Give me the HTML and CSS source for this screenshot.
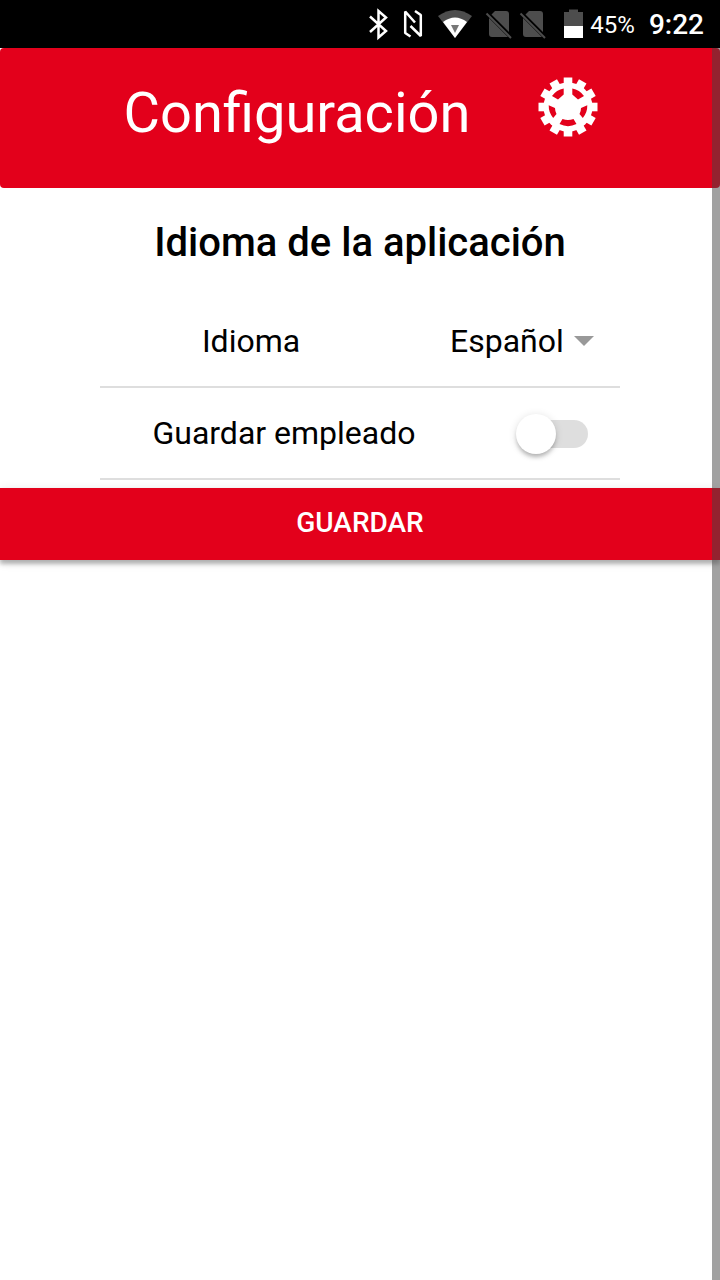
FILE: index.html
```html
<!DOCTYPE html>
<html lang="es">
<head>
<meta charset="utf-8">
<meta name="viewport" content="width=device-width, initial-scale=1">
<title>Configuración</title>
<link rel="stylesheet" href="styles.css">
</head>
<body>
<div class="status-bar">
  <svg class="status-icons" viewBox="360 0 228 48" width="228" height="48" aria-hidden="true">
    <path d="M370 16.500L386 31L378.500 37.500V11L386 17.500L370 32" fill="none" stroke="#fff" stroke-width="2.500"/>
    <path d="M410.500 36.500L405.200 33V11.500L415 22.500M415 11L420.800 15V36L410.500 26" fill="none" stroke="#fff" stroke-width="2.500" stroke-linejoin="bevel"/>
    <path d="M438 16Q455 4 472 16L455 38Z" fill="#4d4d4d"/>
    <path d="M443 22Q455 13 467 22L455 38Z" fill="#fff"/>
    <path d="M451 25H459L455 33Z" fill="#777"/>
    <g id="no-sim">
      <path d="M495 11H506Q509 11 509 14V33L491 15ZM489 18L508 37H492Q489 37 489 34Z" fill="#4d4d4d"/>
      <path d="M489 13.500L512 36.500" stroke="#000" stroke-width="2"/>
      <path d="M486.500 13.500L511 38" stroke="#4d4d4d" stroke-width="2"/>
    </g>
    <use href="#no-sim" x="34"/>
    <path d="M564 12H569V9.500H578V12H583V26H564Z" fill="#4d4d4d"/>
    <path d="M564 26H583V38H564Z" fill="#fff"/>
  </svg>
  <span class="battery">45%</span>
  <time class="clock">9:22</time>
</div>
<main class="page">
  <header class="header">
    <h1 class="title">Configuración</h1>
    <svg class="gear" viewBox="-30 -30 60 60" aria-hidden="true">
      <defs><path id="tooth" d="M-4.300 -29.500H4.300V-22H-4.300Z"/></defs>
      <g class="gear-body">
        <circle r="24.500"/>
        <use href="#tooth"/><use href="#tooth" transform="rotate(30)"/><use href="#tooth" transform="rotate(60)"/>
        <use href="#tooth" transform="rotate(90)"/><use href="#tooth" transform="rotate(120)"/><use href="#tooth" transform="rotate(150)"/>
        <use href="#tooth" transform="rotate(180)"/><use href="#tooth" transform="rotate(210)"/><use href="#tooth" transform="rotate(240)"/>
        <use href="#tooth" transform="rotate(270)"/><use href="#tooth" transform="rotate(300)"/><use href="#tooth" transform="rotate(330)"/>
      </g>
      <path class="gear-holes" d="M-16 -11A19 19 0 0 1 -4.300 -18.500V-12.500L-10 -7.500ZM16 -11A19 19 0 0 0 4.300 -18.500V-12.500L10 -7.500ZM-19.300 -1.700L-13 1Q-13 4 -11.500 7L-14.800 11A19 19 0 0 1 -19.300 -1.700ZM19.300 -1.700L13 1Q13 4 11.500 7L14.800 11A19 19 0 0 0 19.300 -1.700ZM-5.500 12Q0 14 5.500 12L8.500 17A19 19 0 0 1 -8.500 17Z"/>
    </svg>
  </header>
  <form class="settings">
    <h2 class="section-title">Idioma de la aplicación</h2>
    <div class="rows">
      <div class="row">
        <label class="label" for="language">Idioma</label>
        <div class="select-wrap">
          <select class="select" id="language"><option>Español</option></select>
        </div>
      </div>
      <div class="row">
        <label class="label" for="employee">Guardar empleado</label>
        <input class="switch" type="checkbox" id="employee">
      </div>
    </div>
    <button class="save" type="button">GUARDAR</button>
  </form>
  <div class="scrollbar"></div>
</main>
</body>
</html>
```

FILE: styles.css
```css
* { box-sizing: border-box; }

body {
  display: flex;
  flex-direction: column;
  min-height: 100vh;
  margin: 0;
  background: #fff;
  color: #000;
  font-family: Roboto, "Noto Sans", sans-serif;
}

.status-bar {
  display: flex;
  align-items: center;
  justify-content: flex-end;
  height: 48px;
  padding-right: 16px;
  background: #000;
  color: #fff;
}

.status-icons { display: block; }

.battery {
  margin-left: 2px;
  font-size: 24px;
  line-height: 48px;
  padding-top: 2px;
}

.clock {
  margin-left: 14px;
  font-size: 28px;
  font-weight: 500;
  line-height: 48px;
  padding-top: 2px;
}

.page {
  position: relative;
  flex: 1;
}

.header {
  display: flex;
  align-items: flex-start;
  justify-content: center;
  gap: 68px;
  min-height: 140px;
  padding: 29px 0 0 2px;
  border-radius: 4px;
  background: #e3001b;
  color: #fff;
}

.title {
  margin: 0;
  font-size: 56px;
  font-weight: 400;
  line-height: 72px;
}

.gear {
  width: 60px;
  height: 60px;
}

.gear-body { fill: #fff; }

.gear-holes { fill: #e3001b; }

.section-title {
  margin: 0;
  padding: 31px 0 29px;
  font-size: 40px;
  font-weight: 500;
  line-height: 48px;
  text-align: center;
}

.rows {
  margin: 0 100px 8px;
}

.row {
  display: flex;
  align-items: center;
  height: 92px;
  border-bottom: 2px solid #dedede;
  font-size: 32px;
}

.label {
  flex: 1;
  text-align: center;
}

.select-wrap {
  display: flex;
  align-items: center;
  margin: 0 26px 0 48px;
}

.select-wrap::after {
  content: "";
  margin-left: 10px;
  border: 10px solid transparent;
  border-top-color: #999;
  border-bottom: 0;
}

.select {
  appearance: none;
  padding: 0;
  border: 0;
  background: transparent;
  color: inherit;
  font: inherit;
}

.switch {
  position: relative;
  appearance: none;
  width: 72px;
  height: 28px;
  margin: 2px 32px 0 48px;
  border-radius: 14px;
  background: linear-gradient(#dedede, #dedede) right / 56px 28px no-repeat;
}

.switch::before {
  content: "";
  position: absolute;
  top: -6px;
  left: 0;
  width: 40px;
  height: 40px;
  border-radius: 50%;
  background: #fff;
  box-shadow: 0 4px 4px -1px rgba(0, 0, 0, 0.25), 0 1px 8px rgba(0, 0, 0, 0.12);
}

.save {
  display: block;
  width: 100%;
  height: 72px;
  padding: 0 0 2px;
  border: 0;
  background: #e3001b;
  box-shadow: 0 4px 4px rgba(0, 0, 0, 0.25), 0 2px 10px rgba(0, 0, 0, 0.12);
  color: #fff;
  font: 500 28px/36px Roboto, "Noto Sans", sans-serif;
}

.scrollbar {
  position: absolute;
  top: 0;
  right: 0;
  bottom: 0;
  width: 8px;
  background: rgba(68, 68, 68, 0.5);
}
```
